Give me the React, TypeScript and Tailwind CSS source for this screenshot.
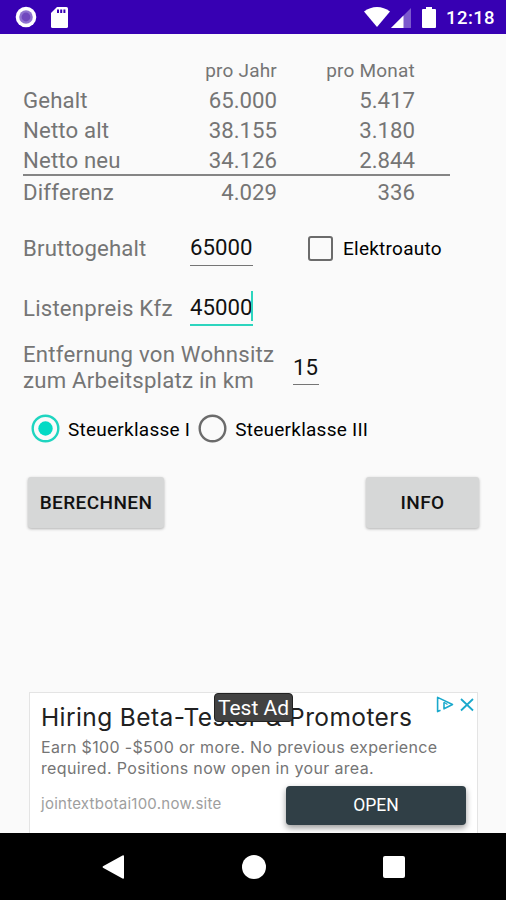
import { useState } from 'react';

const ROWS = [
  { label: 'Gehalt', year: '65.000', month: '5.417' },
  { label: 'Netto alt', year: '38.155', month: '3.180' },
  { label: 'Netto neu', year: '34.126', month: '2.844' },
];

function StatusBar() {
  return (
    <header className="flex h-[34px] items-center bg-[#3700b3] text-white">
      <svg className="ml-[15px] h-[22px] w-[22px]" viewBox="0 0 22 22">
        <circle cx="11" cy="11" r="10.3" fill="#fff" />
        <circle cx="11" cy="11" r="6.8" fill="#8f73d0" />
        <circle cx="11" cy="11" r="4.4" fill="#7048be" />
      </svg>
      <svg className="mt-[1px] ml-[14px] h-[21px] w-[17px]" viewBox="0 0 17 21">
        <path d="M6 0h9.4Q17 0 17 1.6v17.8q0 1.6-1.6 1.6H1.6Q0 21 0 19.4V6z" fill="#fff" />
        <path d="M6 2.6h2v3.4H6zM9.2 2.6h2v3.4h-2zM12.4 2.6h2v3.4h-2z" fill="#3700b3" />
      </svg>
      <div className="flex-1" />
      <svg className="h-[20px] w-[26px]" viewBox="0 0 26 20">
        <path d="M0 4.5Q6 0 13 0t13 4.5L13 20z" fill="#fff" />
      </svg>
      <svg className="mt-[1px] ml-[1px] h-[20px] w-[20px]" viewBox="0 0 20 20">
        <path d="M20 0v20H0z" fill="#fff" opacity=".35" />
        <path d="M12.5 7.5V20H0z" fill="#fff" />
      </svg>
      <svg className="ml-[11px] h-[21px] w-[14px]" viewBox="0 0 14 21">
        <path d="M4 0h6v2h3q1 0 1 1v17q0 1-1 1H1q-1 0-1-1V3q0-1 1-1h3z" fill="#fff" />
      </svg>
      <span className="mt-[2px] mr-[11px] ml-[10px] text-[18.5px] font-medium tracking-[0.4px]">12:18</span>
    </header>
  );
}

function SalaryTable() {
  return (
    <div className="h-[172px] w-[427px] pt-[25px]">
      <div className="flex h-[26px] items-start text-[19px] leading-[24px] tracking-[0.2px]">
        <span className="w-[254px] text-right">pro Jahr</span>
        <span className="w-[138px] text-right">pro Monat</span>
      </div>
      {ROWS.map((row) => (
        <div key={row.label} className="flex h-[30px] items-center">
          <span className="w-[154px] tracking-[0.15px]">{row.label}</span>
          <span className="w-[100px] text-right">{row.year}</span>
          <span className="w-[138px] text-right">{row.month}</span>
        </div>
      ))}
      <div className="-mt-[1px] h-[2px] bg-[#858585]" />
      <div className="flex h-[31px] items-center">
        <span className="w-[154px] tracking-[0.2px]">Differenz</span>
        <span className="w-[100px] text-right">4.029</span>
        <span className="w-[138px] text-right">336</span>
      </div>
    </div>
  );
}

function Radio({ label, checked, onClick }: { label: string; checked: boolean; onClick: () => void }) {
  return (
    <button className="flex items-center gap-[8px]" onClick={onClick}>
      <svg className="h-[29px] w-[29px]" viewBox="0 0 29 29">
        <circle cx="14.5" cy="14.5" r="12.8" fill="none" stroke={checked ? '#1fd5c0' : '#6b6b6b'} strokeWidth="2.4" />
        {checked && <circle cx="14.5" cy="14.5" r="7.2" fill="#03dac5" />}
      </svg>
      <span className="mt-[2px] text-[19px] tracking-[0.25px] text-black">{label}</span>
    </button>
  );
}

function AdBanner() {
  return (
    <div className="relative ml-[29px] h-[141px] w-[449px] border border-b-0 border-[#e4e4e4] bg-white px-[11px] pt-[9px] font-[Inter,sans-serif]">
      <h2 className="h-[30px] text-[24.5px] leading-[30px] tracking-[0.4px] whitespace-nowrap text-[#212121]">
        Hiring Beta-Tester &amp; Promoters
      </h2>
      <p className="mt-[5px] text-[16px] leading-[21px] tracking-[0.35px] whitespace-nowrap text-[#757575]">
        Earn $100 -$500 or more. No previous experience
        <br />
        required. Positions now open in your area.
      </p>
      <div className="mt-[7px] flex items-start justify-between">
        <span className="mt-[8px] text-[15px] leading-[20px] tracking-[0.26px] text-[#9e9e9e]">jointextbotai100.now.site</span>
        <button className="h-[39px] w-[180px] rounded-[4px] bg-[#303f46] pb-[2px] font-[Roboto,sans-serif] text-[17.5px] text-white shadow-[0_3px_6px_rgba(0,0,0,0.4)]">
          OPEN
        </button>
      </div>
      <svg className="absolute top-[3px] right-[3px] h-[17px] w-[38px]" viewBox="0 0 38 17" fill="none" stroke="#1ba9cc" strokeWidth="1.8">
        <path d="M4.5 14.2 1.6 15.6V1.4L16.5 8.5 8 12.8V6.2" strokeWidth="1.6" strokeLinejoin="round" />
        <path d="M8 6.2 11.5 8.5" strokeWidth="1.1" />
        <path d="M25 3 37 14.5M37 3 25 14.5" />
      </svg>
      <div className="absolute top-0 left-[184px] flex h-[29px] w-[79px] items-center justify-center rounded-[4px] border border-[#222] bg-[#424242] font-[Roboto,sans-serif] text-[21px] whitespace-nowrap text-white">
        Test Ad
      </div>
    </div>
  );
}

function NavigationBar() {
  return (
    <nav className="flex h-[67px] items-center bg-black">
      <svg className="ml-[102px] h-[24px] w-[22px]" viewBox="0 0 22 24">
        <path d="M1 11.3 20.5.4Q22 0 22 1.2v21.6q0 1.2-1.5.8L1 12.7q-1-.7 0-1.4z" fill="#fff" />
      </svg>
      <div className="ml-[118px] h-[24px] w-[24px] rounded-full bg-white" />
      <div className="ml-[117px] h-[22px] w-[22px] rounded-[2px] bg-white" />
    </nav>
  );
}

export default function App() {
  const [steuerklasse, setSteuerklasse] = useState(1);

  return (
    <div className="flex h-[900px] w-[506px] flex-col overflow-hidden bg-[#fafafa] font-[Roboto,sans-serif] text-[22.2px] leading-[26px] text-[#757575]">
      <StatusBar />
      <main className="flex-1 pl-[23px]">
        <SalaryTable />

        <div className="flex h-[60px] items-start pt-[29px]">
          <span className="w-[167px] tracking-[0.15px]">Bruttogehalt</span>
          <div className="-mt-[1px] h-[32px] w-[63px] border-b border-[#757575] text-[#111]">65000</div>
          <label className="-mt-[1px] ml-[55px] flex items-center gap-[10px]">
            <span className="h-[25px] w-[25px] rounded-[3px] border-2 border-[#6b6b6b]" />
            <span className="mt-[2px] text-[19px] tracking-[0.25px] text-black">Elektroauto</span>
          </label>
        </div>

        <div className="flex h-[75px] items-start pt-[29px]">
          <span className="w-[167px] tracking-[0.2px]">Listenpreis Kfz</span>
          <div className="relative -mt-[1px] h-[32px] w-[63px] border-b-2 border-[#2dd5be] text-[#111]">
            45000
            <span className="absolute -top-[3px] right-0 h-[30px] w-[2px] bg-[#2dd5be]" />
          </div>
        </div>

        <div className="flex h-[73px] items-start">
          <p className="w-[270px] tracking-[0.22px]">
            Entfernung von Wohnsitz
            <br />
            zum Arbeitsplatz in km
          </p>
          <div className="mt-[13px] h-[31px] w-[26px] border-b border-[#757575] text-[#111]">15</div>
        </div>

        <div className="ml-[8px] flex h-[29px] items-center gap-[8px]">
          <Radio label="Steuerklasse I" checked={steuerklasse === 1} onClick={() => setSteuerklasse(1)} />
          <Radio label="Steuerklasse III" checked={steuerklasse === 3} onClick={() => setSteuerklasse(3)} />
        </div>

        <div className="mt-[34px] mr-[27px] ml-[5px] flex justify-between text-[19px] font-medium tracking-[0.4px] text-[#111]">
          <button className="h-[51px] w-[136px] rounded-[3px] bg-[#d6d7d7] shadow-[0_1px_3px_rgba(0,0,0,0.3)]">BERECHNEN</button>
          <button className="h-[51px] w-[113px] rounded-[3px] bg-[#d6d7d7] shadow-[0_1px_3px_rgba(0,0,0,0.3)]">INFO</button>
        </div>
      </main>
      <AdBanner />
      <NavigationBar />
    </div>
  );
}
